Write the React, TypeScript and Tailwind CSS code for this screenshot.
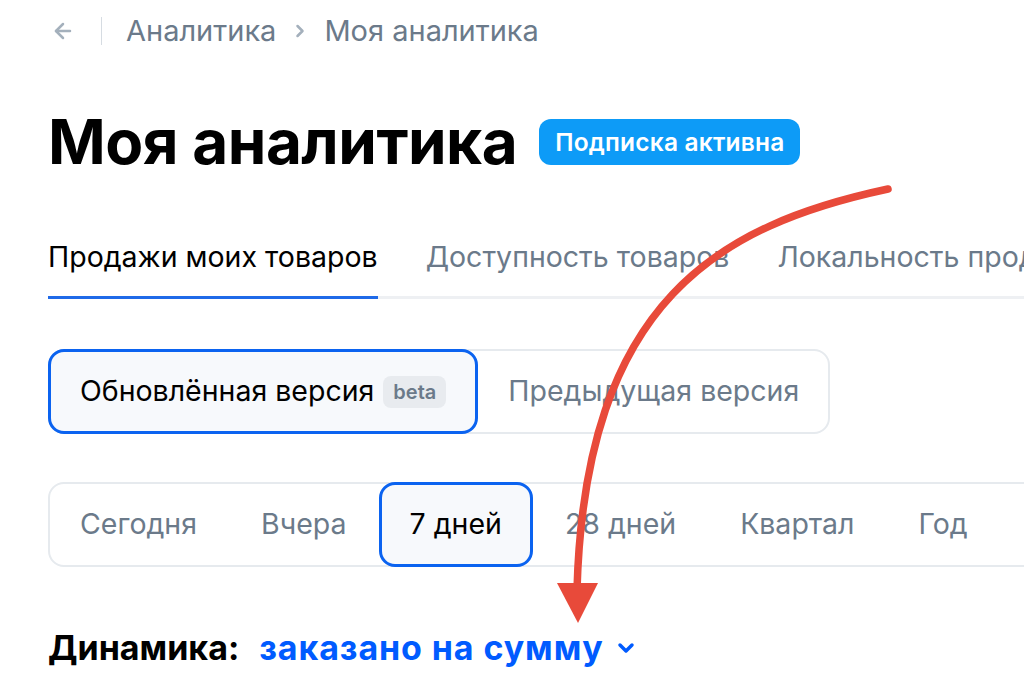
import { ChevronDown, ChevronRight, ArrowLeft } from "lucide-react";

const periods = ["Сегодня", "Вчера", "7 дней", "28 дней", "Квартал", "Год"];

function RedArrow() {
  return (
    <svg
      className="pointer-events-none absolute left-0 top-0"
      width="1024"
      height="691"
      viewBox="0 0 1024 691"
    >
      <path
        d="M888 189 C720 225, 585 300, 577 590"
        fill="none"
        stroke="#e84a3a"
        strokeWidth="7.5"
        strokeLinecap="round"
      />
      <polygon points="557,583 598,583 578,623" fill="#e84a3a" />
    </svg>
  );
}

export default function App() {
  const active = "7 дней";

  return (
    <div
      className="relative h-[691px] w-[1024px] overflow-hidden bg-white px-12 pt-[11px]"
      style={{ fontFamily: "Inter, 'Noto Sans', sans-serif" }}
    >
      <div className="flex h-10 items-center text-[29px] text-[#6b7a8a]">
        <ArrowLeft className="ml-[3px] h-6 w-6 text-[#a4b0bc]" strokeWidth={2.5} />
        <div className="ml-[26px] mr-6 h-7 w-px bg-[#d6dce2]" />
        <span>Аналитика</span>
        <ChevronRight className="mx-[14px] h-5 w-5 text-[#a4b0bc]" strokeWidth={3} />
        <span>Моя аналитика</span>
      </div>

      <div className="mt-[60px] flex items-center gap-[22px]">
        <h1 className="text-[62px] font-bold leading-none tracking-[-0.5px] text-black">
          Моя аналитика
        </h1>
        <span className="rounded-xl bg-[#0d9bf7] px-[16px] py-[7px] text-[24.5px] font-semibold leading-8 tracking-[0.2px] text-white">
          Подписка активна
        </span>
      </div>

      <div className="mt-[68px] -mr-12 flex gap-12 whitespace-nowrap border-b-[3px] border-[#eef0f3] text-[28.5px] leading-8">
        <div className="-mb-[3px] border-b-[3px] border-[#1f6ae8] pb-[23px] text-black">
          Продажи моих товаров
        </div>
        <div className="pb-[23px] text-[#6b7a8a]">Доступность товаров</div>
        <div className="pb-[23px] text-[#6b7a8a]">Локальность продаж</div>
      </div>

      <div className="mt-[50px] flex h-[85px] w-fit whitespace-nowrap rounded-2xl border-2 border-[#e6eaee] text-[28.5px]">
        <div className="-m-[2px] flex items-center gap-[9px] rounded-2xl border-[3px] border-[#0b63f0] bg-[#f7f9fc] px-[29px] text-black">
          Обновлённая версия
          <span className="flex h-8 items-center rounded-lg bg-[#e8ebef] px-[10px] text-[20px] font-semibold text-[#6b7a8a]">
            beta
          </span>
        </div>
        <div className="flex items-center pl-8 pr-[29px] text-[#6b7a8a]">Предыдущая версия</div>
      </div>

      <div className="mt-12 -mr-20 flex h-[85px] whitespace-nowrap rounded-2xl border-2 border-[#e6eaee] text-[28.5px]">
        {periods.map((p, i) =>
          p === active ? (
            <div
              key={p}
              className="-my-[2px] flex items-center rounded-2xl border-[3px] border-[#0b63f0] bg-[#f7f9fc] px-[28px] text-black"
            >
              {p}
            </div>
          ) : (
            <div
              key={p}
              className={`flex items-center px-8 text-[#6b7a8a] ${i === 0 ? "pl-[30px]" : ""}`}
            >
              {p}
            </div>
          )
        )}
      </div>

      <div className="mt-[63px] flex items-center text-[34px] font-bold leading-9">
        <span className="text-black">Динамика:</span>
        <span className="ml-5 tracking-[0.9px] text-[#005bff]">заказано на сумму</span>
        <ChevronDown className="ml-[10px] h-6 w-6 text-[#005bff]" strokeWidth={3.5} />
      </div>

      <RedArrow />
    </div>
  );
}
